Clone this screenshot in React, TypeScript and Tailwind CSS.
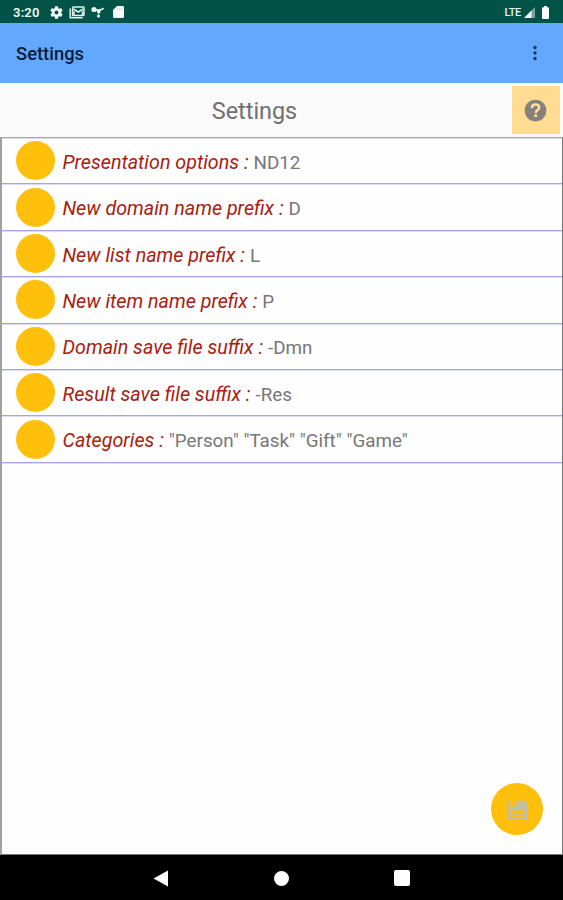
import React from "react";

const rows = [
  { label: "Presentation options :", value: "ND12" },
  { label: "New domain name prefix :", value: "D" },
  { label: "New list name prefix :", value: "L" },
  { label: "New item name prefix :", value: "P" },
  { label: "Domain save file suffix :", value: "-Dmn" },
  { label: "Result save file suffix :", value: "-Res" },
  { label: "Categories :", value: '"Person" "Task" "Gift" "Game"' },
];

function GearIcon() {
  return (
    <svg className="ml-[9px] size-[13px]" viewBox="2 2 20 20" fill="#f4fbf9">
      <path d="M19.14 12.94c.04-.3.06-.61.06-.94 0-.32-.02-.64-.07-.94l2.03-1.58a.49.49 0 0 0 .12-.61l-1.92-3.32a.49.49 0 0 0-.59-.22l-2.39.96c-.5-.38-1.03-.7-1.62-.94l-.36-2.54a.48.48 0 0 0-.48-.41h-3.84a.47.47 0 0 0-.47.41l-.36 2.54c-.59.24-1.13.57-1.62.94l-2.39-.96a.48.48 0 0 0-.59.22L2.74 8.87a.47.47 0 0 0 .12.61l2.03 1.58c-.05.3-.09.63-.09.94s.02.64.07.94l-2.03 1.58a.49.49 0 0 0-.12.61l1.92 3.32c.12.22.37.29.59.22l2.39-.96c.5.38 1.03.7 1.62.94l.36 2.54c.05.24.24.41.48.41h3.84c.24 0 .44-.17.47-.41l.36-2.54c.59-.24 1.13-.56 1.62-.94l2.39.96c.22.08.47 0 .59-.22l1.92-3.32a.47.47 0 0 0-.12-.61zM12 15a3 3 0 1 1 0-6 3 3 0 0 1 0 6z" />
    </svg>
  );
}

function StatusBar() {
  return (
    <div className="flex h-[23px] shrink-0 items-center bg-[#005346] pl-[13px] pr-[14px] pt-px">
      <span className="w-[28px] whitespace-nowrap text-[13px] font-semibold leading-none tracking-[0.2px] text-[#f0faf7]">3:20</span>
      <GearIcon />
      <svg className="ml-[6px] h-[13px] w-[16px]" viewBox="0 0 16 13" fill="none" stroke="#e4f2ee">
        <path d="M1.2 2.5v9.3h12.5" strokeWidth="1.5" />
        <rect x="3.6" y="1" width="11.4" height="8.6" rx=".8" strokeWidth="1.5" />
        <path d="m4.5 3 4.8 3 4.8-3M5 9V5.2m8.5 3.8V5.2" strokeWidth="1.5" />
      </svg>
      <svg className="ml-[6px] h-[12px] w-[13px]" viewBox="0 0 13 12" fill="#e9f5f2">
        <circle cx="3" cy="3.5" r="2.6" />
        <circle cx="7.7" cy="5.8" r="1.8" />
        <circle cx="7.5" cy="10" r="1.6" />
        <circle cx="11.7" cy="2.8" r="1.1" />
        <path d="m3 3.5 5 2.3 3.7-3M7.7 6v4" stroke="#e9f5f2" strokeWidth=".7" />
      </svg>
      <svg className="ml-[9px] h-[12px] w-[11px]" viewBox="0 0 11 12" fill="#f7fcfb">
        <path d="M4 0h5.8Q11 0 11 1.2v9.6Q11 12 9.8 12H1.2Q0 12 0 10.8V4z" />
        <path d="M4.4 2v2m2-2v2m2-2v2" stroke="#b5cdc7" strokeWidth=".8" />
      </svg>
      <span className="ml-auto text-[11px] font-medium leading-none tracking-[-0.3px] text-[#eaf5f2]">LTE</span>
      <svg className="ml-[3px] size-[11px]" viewBox="0 0 11 11">
        <path d="M11 0v11H0z" fill="#79a39a" />
        <path d="M7.5 3.5V11H0z" fill="#f4faf8" />
      </svg>
      <svg className="ml-[7px] h-[13px] w-[7px]" viewBox="0 0 7 13" fill="#fff">
        <path d="M2 0h3v1.2h1q1 0 1 1V12q0 1-1 1H1q-1 0-1-1V2.200q0-1 1-1h1z" />
      </svg>
    </div>
  );
}

export default function App() {
  return (
    <div className="relative flex h-[900px] w-[563px] flex-col overflow-hidden bg-[#fafafa] font-[Roboto,sans-serif]">
      <StatusBar />
      <header className="flex h-[60px] shrink-0 items-center justify-between bg-[#62a8ff] pl-[16px] pr-[26px]">
        <h1 className="pt-[2px] text-[18.4px] font-medium leading-none text-[#0a1c38]">Settings</h1>
        <svg className="h-[16px] w-[4px]" viewBox="0 0 4 16" fill="#17345f">
          <circle cx="2" cy="2.500" r="1.7" />
          <circle cx="2" cy="8" r="1.7" />
          <circle cx="2" cy="13.500" r="1.7" />
        </svg>
      </header>
      <div className="flex h-[54px] shrink-0 items-center">
        <h2 className="w-[509px] pt-[3px] text-center text-[23.4px] leading-none text-[#707070]">Settings</h2>
        <button className="ml-[3px] flex h-[48px] w-[48px] items-center justify-center bg-[#ffdc91] pr-px">
          <svg className="size-[23px]" viewBox="0 0 23 23">
            <circle cx="11.500" cy="11.500" r="10.800" fill="#85817c" />
            <path d="M7.900 8.900q0-3.300 3.600-3.300 3.700 0 3.700 2.900c0 2.400-3.500 2.500-3.500 5.400" fill="none" stroke="#ffdf9d" strokeWidth="2.500" />
            <rect x="10.300" y="15.300" width="2.700" height="2.700" fill="#ffdf9d" />
          </svg>
        </button>
      </div>
      <main className="flex-1 border-b border-l-2 border-r border-t border-b-[#777] border-l-[#a0a0a0] border-r-[#777] border-t-[#a6a6a6] bg-[#fefefe] shadow-[inset_0_1px_0_#dedede]">
        {rows.map((row) => (
          <div key={row.label} className="flex h-[46.4px] items-center border-b border-[#a5a2eb] pl-[14.3px] shadow-[0_1px_0_#dedcf8]">
            <span className="size-[39px] shrink-0 rounded-full bg-[#ffc00b]" />
            <p className="ml-[7.2px] whitespace-pre pt-[4px] text-[19.7px] leading-none text-[#777]">
              <em className="text-[#a8200f]">{row.label}</em> <span className="text-[18.8px]">{row.value}</span>
            </p>
          </div>
        ))}
      </main>
      <button className="absolute left-[491px] top-[783px] flex size-[52px] items-center justify-center rounded-full bg-[#ffc00b]">
        <svg className="mt-[2px] size-[22px]" viewBox="0 0 22 22" fill="#c0bda9">
          <path fillRule="evenodd" d="M1 1h3v6.500h4.500V4l2-2.500h2.500V5h1.500V1.500H18L21 4.500V21H1zM4.500 10v8.500h13V10z" />
          <path d="M6 11.500h10v1.500H6zM6 15h10v1.500H6z" />
          <rect x="10.300" y="3.500" width="1.500" height="2.500" fill="#ffc00b" />
        </svg>
      </button>
      <nav className="flex h-[45px] shrink-0 items-center bg-black pl-[153px] pt-px">
        <svg className="h-[17px] w-[15px]" viewBox="0 0 15 17" fill="#fff"><path d="M15 .5v16L.5 8.500z" /></svg>
        <span className="ml-[106px] size-[15px] rounded-full bg-white" />
        <span className="ml-[105px] size-[16px] rounded-[2px] bg-white" />
      </nav>
    </div>
  );
}
